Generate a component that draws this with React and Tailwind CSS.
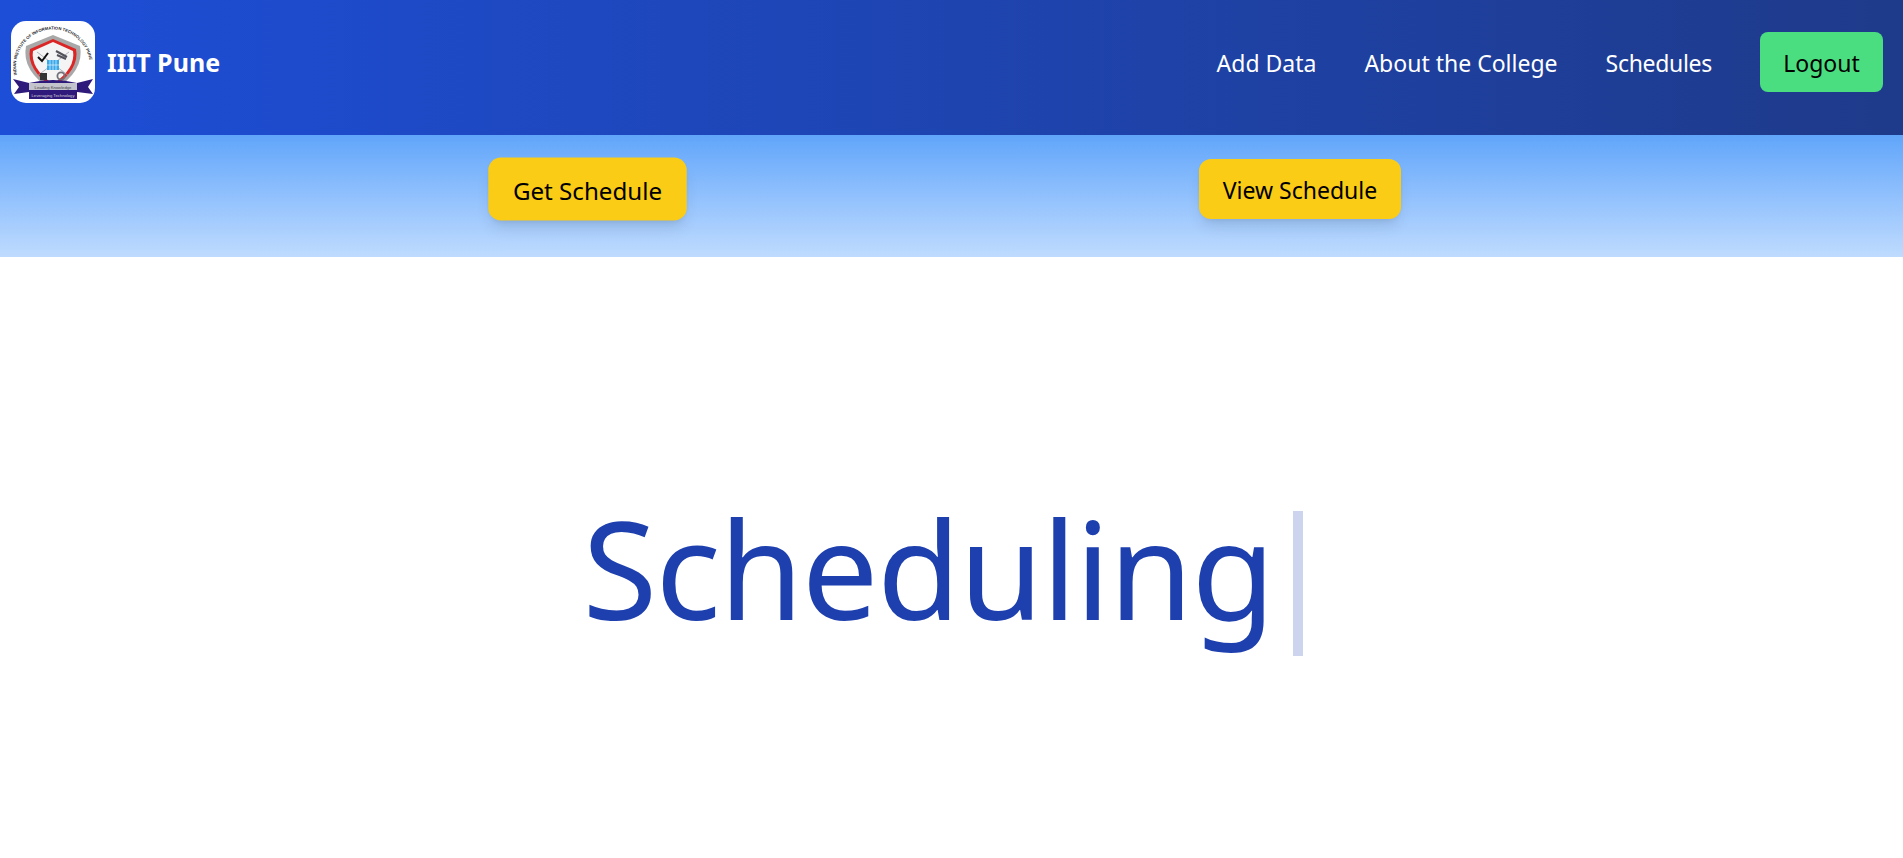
const font = { fontFamily: '"Noto Sans", sans-serif' };

const Logo = () => (
  <svg viewBox="0 0 84 82" className="w-[84px] h-[82px] shrink-0">
    <defs>
      <path id="ring" d="M 6 54 A 37 37 0 1 1 78 54" />
    </defs>
    <rect width="84" height="82" rx="15" fill="#fff" />
    <text fontSize="4.2" fontWeight="700" fontFamily="Liberation Sans" fill="#27272a">
      <textPath href="#ring">INDIAN INSTITUTE OF INFORMATION TECHNOLOGY PUNE</textPath>
    </text>
    {/* shield */}
    <path d="M42 14 L69 25 Q74 50 42 70 Q10 50 15 25 Z" fill="#a8a8a8" />
    <path d="M42 18 L65 28 Q69 48 42 67 Q15 48 19 28 Z" fill="#dc2626" />
    <path d="M42 21 L62 30 Q65 47 42 63 Q19 47 22 30 Z" fill="#f4f4f5" />
    <path d="M26 31 L58 55 M58 31 L26 55" stroke="#a1a1aa" strokeWidth="0.8" />
    <path d="M27 36 l4 4 l6 -8" fill="none" stroke="#111" strokeWidth="2" />
    <path d="M45 30 l11 6 M46 34 l9 4" stroke="#52525b" strokeWidth="2" />
    <rect x="36" y="39" width="12" height="10" fill="#38a9e8" />
    <path d="M39 39 v10 M42 39 v10 M45 39 v10 M36 44 h12" stroke="#fff" strokeWidth="0.6" />
    <path d="M29 52 h7 v7 h-7 z" fill="#333" />
    <circle cx="50" cy="55" r="3.6" fill="none" stroke="#71717a" strokeWidth="1.8" />
    {/* ribbon */}
    <path d="M2 58 L18 62 Q42 56 66 62 L82 58 L77 66 L82 73 L66 71 L66 78 L18 78 L18 71 L3 73 L8 66 Z" fill="#2e1a7a" />
    <rect x="18" y="62" width="48" height="7" fill="#c4c4cc" />
    <text x="42" y="67.5" textAnchor="middle" fontSize="4.2" fontFamily="Liberation Sans" fill="#3f3f46">Leading Knowledge</text>
    <text x="42" y="75.5" textAnchor="middle" fontSize="4.2" fontFamily="Liberation Sans" fill="#d4d4d8">Leveraging Technology</text>
  </svg>
);

const NavLink = ({ children, className = "" }) => (
  <a href="#" className={`text-white text-[23px] leading-9 pt-0.5 ${className}`}>
    {children}
  </a>
);

const App = () => {
  return (
    <div className="min-h-screen bg-white overflow-hidden" style={font}>
      {/* Navbar */}
      <nav className="h-[135px] bg-gradient-to-r from-[#1d4ed8] to-[#1e3a8a] flex items-center justify-between pl-[11px] pr-5 pb-[11px]">
        <div className="flex items-center gap-3">
          <Logo />
          <span className="text-white text-[25px] font-bold pt-0.5">IIIT Pune</span>
        </div>
        <div className="flex items-center gap-12">
          <NavLink>Add Data</NavLink>
          <NavLink>About the College</NavLink>
          <NavLink className="tracking-[-0.3px]">Schedules</NavLink>
          <button className="w-[123px] h-[60px] pt-0.5 bg-[#4ade80] text-black text-[23px] rounded-lg">
            Logout
          </button>
        </div>
      </nav>

      {/* Action bar */}
      <div className="h-[122px] bg-gradient-to-b from-[#60a5fa] to-[#bfdbfe] flex items-center pl-[493px] gap-[517px] pb-[14px]">
        <button className="w-[189px] h-[60px] pt-0.5 scale-105 bg-[#facc15] text-black text-[23px] rounded-xl shadow-lg">
          Get Schedule
        </button>
        <button className="w-[202px] h-[60px] pt-0.5 bg-[#facc15] text-black text-[23px] rounded-xl shadow-lg">
          View Schedule
        </button>
      </div>

      {/* Hero */}
      <div className="flex justify-center pt-[254px] pr-[18px]">
        <h1 className="text-[136px] leading-[114px] tracking-[-1.5px] text-[#1e40af] flex items-start">
          Scheduling
          <span className="w-2.5 h-[145px] ml-[19px] bg-[#ccd4ee]"></span>
        </h1>
      </div>
    </div>
  );
};

export default App;
